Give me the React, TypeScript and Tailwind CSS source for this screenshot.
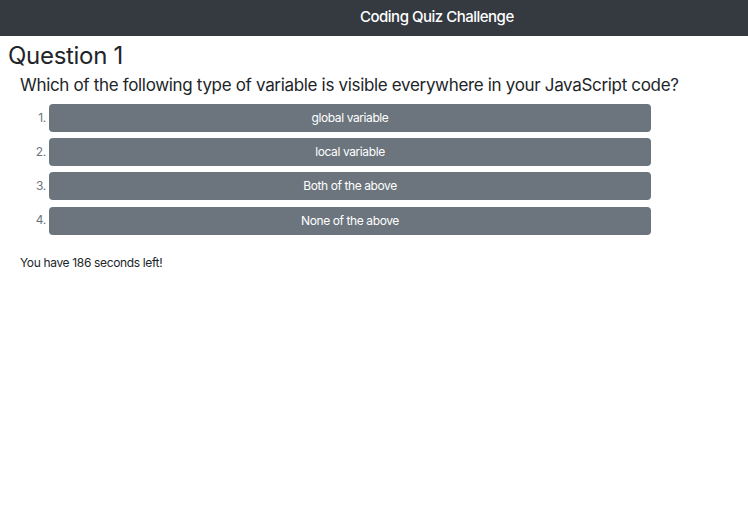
import React from "react";

const answers = ["global variable", "local variable", "Both of the above", "None of the above"];

export default function App() {
  return (
    <div className="min-h-[528px] w-[748px] bg-white text-[#212529]" style={{ fontFamily: "Inter, 'Liberation Sans', sans-serif" }}>
      <nav className="h-[36px] bg-[#343a40] flex items-center">
        <div className="pl-[360px] pb-[2px] text-white text-[15px] font-medium tracking-[-0.5px]">Coding Quiz Challenge</div>
      </nav>
      <div className="pl-[8px] pt-[5px]">
        <h2 className="text-[24px] leading-[29px] font-normal tracking-[-0.3px]">Question 1</h2>
        <div className="pl-[12px]">
          <p className="text-[17px] leading-[22px] mt-[4px] tracking-[-0.33px]">Which of the following type of variable is visible everywhere in your JavaScript code?</p>
          <ol className="mt-[8px] flex flex-col gap-[6.2px]">
            {answers.map((a, i) => (
              <li key={a} className="flex items-center">
                <span className="w-[29px] text-right pr-[3px] pb-[1px] text-[12px] leading-[14px] text-[#6c757d] tracking-[-0.3px]">{i + 1}.</span>
                <button className="w-[602px] h-[28px] rounded-[4px] bg-[#6c757d] text-white text-[12px] tracking-[-0.4px]">{a}</button>
              </li>
            ))}
          </ol>
          <p className="mt-[20px] text-[12px] leading-[16px] tracking-[-0.35px]">You have 186 seconds left!</p>
        </div>
      </div>
    </div>
  );
}
